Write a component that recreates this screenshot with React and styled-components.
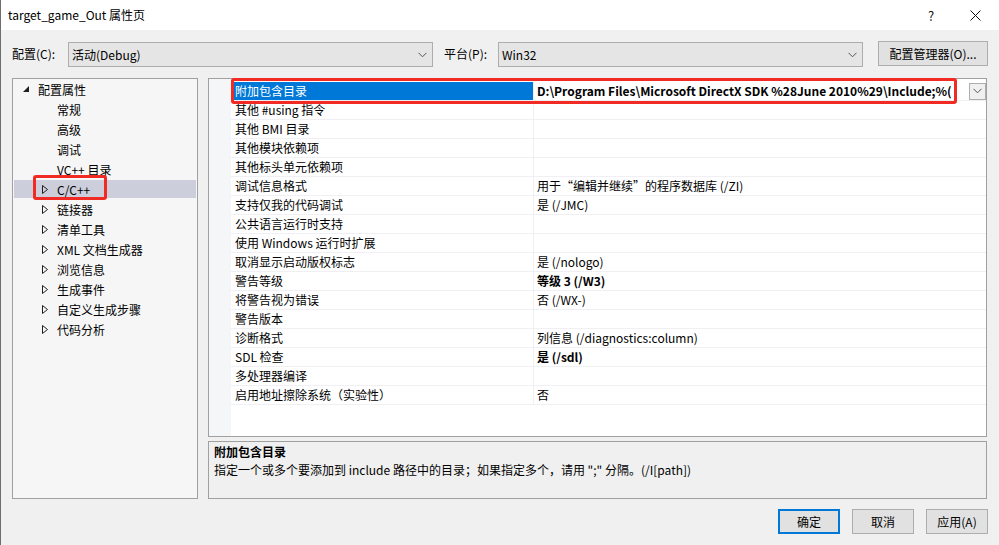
import styled, { createGlobalStyle } from "styled-components";

const GlobalStyle = createGlobalStyle`
  html, body {
    margin: 0;
    padding: 0;
    background: #f0f0f0;
  }
  * {
    box-sizing: border-box;
  }
  body {
    font-family: "Noto Sans CJK SC", "Noto Sans", sans-serif;
    font-size: 12px;
    color: #000;
  }
`;

const Window = styled.div`
  width: 999px;
  height: 545px;
  background: #f0f0f0;
  border-left: 1px solid #6e6e6e;
  display: flex;
  flex-direction: column;
  overflow: hidden;
`;

const TitleBar = styled.div`
  height: 30px;
  flex-shrink: 0;
  background: #fff;
  display: flex;
  align-items: center;
  padding-left: 7px;
  padding-right: 2px;
`;

const Title = styled.div`
  font-size: 12px;
  line-height: 30px;
`;

const TitleButton = styled.div`
  width: 44px;
  height: 30px;
  display: flex;
  align-items: center;
  justify-content: center;
  font-size: 13px;
  color: #111;
  margin-left: ${(p) => (p.$first ? "auto" : "0")};
`;

const ConfigRow = styled.div`
  margin-top: 11px;
  height: 25px;
  flex-shrink: 0;
  display: flex;
  align-items: center;
  padding-left: 11px;
`;

const Label = styled.div`
  width: ${(p) => p.$width}px;
  margin-left: ${(p) => p.$gap || 0}px;
  line-height: 25px;
  white-space: nowrap;
`;

const Combo = styled.div`
  width: 365px;
  height: 25px;
  background: #e5e5e5;
  border: 1px solid #adadad;
  display: flex;
  align-items: center;
  justify-content: space-between;
  padding: 0 5px 0 3px;
  transform: translateY(1px);
`;

const Button = styled.div`
  width: ${(p) => p.$width}px;
  height: 25px;
  margin-left: ${(p) => p.$gap || 0}px;
  background: #e1e1e1;
  border: ${(p) => (p.$default ? "2px solid #0078d7" : "1px solid #adadad")};
  display: flex;
  align-items: center;
  justify-content: center;
  white-space: nowrap;
`;

const Main = styled.div`
  margin-top: 12px;
  height: 421px;
  flex-shrink: 0;
  display: flex;
  padding-left: 11px;
  gap: 10px;
`;

const Tree = styled.div`
  width: 186px;
  height: 100%;
  background: #f6f6f6;
  border: 1px solid #a0a0a0;
  display: flex;
  flex-direction: column;
`;

const TreeItem = styled.div`
  position: relative;
  height: 20px;
  display: flex;
  align-items: center;
  padding-left: ${(p) => 8 + p.$level * 19}px;
  margin-right: 1px;
  white-space: nowrap;
  background: ${(p) =>
    p.$selected ? "linear-gradient(#cccedb, #cccedb) 1px 1px / calc(100% - 1px) 18px no-repeat" : "transparent"};
`;

const Expander = styled.div`
  width: 17px;
  height: 20px;
  display: flex;
  align-items: center;
  padding-left: 2px;
`;

const Annotation = styled.div`
  position: absolute;
  left: ${(p) => p.$left}px;
  top: ${(p) => p.$top}px;
  width: ${(p) => p.$width}px;
  height: ${(p) => p.$height}px;
  border: 3px solid #f22a24;
  border-radius: 3px;
  pointer-events: none;
`;

const RightColumn = styled.div`
  width: 779px;
  height: 100%;
  display: flex;
  flex-direction: column;
  gap: 4px;
`;

const Grid = styled.div`
  position: relative;
  height: 359px;
  flex-shrink: 0;
  background: #fff;
  border: 1px solid #a0a0a0;
  display: flex;
`;

const Gutter = styled.div`
  width: 22px;
  background: #f5f6f8;
`;

const Rows = styled.div`
  flex: 1;
  padding-top: 3px;
  display: flex;
  flex-direction: column;
`;

const Row = styled.div`
  height: 19px;
  display: grid;
  grid-template-columns: 302px 1fr;
  border-bottom: 1px solid #f0f0f4;
`;

const NameCell = styled.div`
  margin-left: 1px;
  padding-left: 3px;
  line-height: 18px;
  white-space: nowrap;
  overflow: hidden;
  background: ${(p) => (p.$selected ? "#0078d7" : "transparent")};
  color: ${(p) => (p.$selected ? "#fff" : "#000")};
`;

const ValueCell = styled.div`
  border-left: 1px solid #f0f0f4;
  padding-left: 3px;
  display: flex;
  align-items: center;
  overflow: hidden;
`;

const ValueText = styled.div`
  flex: 1;
  line-height: 18px;
  white-space: nowrap;
  font-weight: ${(p) => (p.$bold ? 700 : 400)};
`;

const DropButton = styled.div`
  width: 17px;
  height: 17px;
  flex-shrink: 0;
  background: #f0f0f0;
  border: 1px solid #adadad;
  display: flex;
  align-items: center;
  justify-content: center;
`;

const Description = styled.div`
  height: 58px;
  background: #f0f0f0;
  border: 1px solid #a0a0a0;
  padding: 1px 5px 0;
`;

const DescTitle = styled.div`
  font-weight: 700;
  line-height: 18px;
`;

const DescText = styled.div`
  line-height: 18px;
`;

const Footer = styled.div`
  margin-top: 10px;
  display: flex;
  justify-content: flex-end;
  padding-right: 11px;
`;

const Chevron = () => (
  <svg width="9" height="6" viewBox="0 0 9 6">
    <polyline points="0.5,0.8 4.5,4.8 8.5,0.8" fill="none" stroke="#555" strokeWidth="1" />
  </svg>
);

const ExpandedArrow = () => (
  <svg width="6" height="6" viewBox="0 0 6 6">
    <polygon points="6,0 6,6 0,6" fill="#1e1e1e" />
  </svg>
);

const CollapsedArrow = () => (
  <svg width="6" height="9" viewBox="0 0 6 9">
    <polygon points="0.5,0.5 5.5,4.5 0.5,8.5" fill="none" stroke="#1e1e1e" strokeWidth="1" />
  </svg>
);

const CloseIcon = () => (
  <svg width="11" height="11" viewBox="0 0 11 11">
    <line x1="0.5" y1="0.5" x2="10.5" y2="10.5" stroke="#111" strokeWidth="1" />
    <line x1="10.5" y1="0.5" x2="0.5" y2="10.5" stroke="#111" strokeWidth="1" />
  </svg>
);

const treeItems = [
  { label: "配置属性", level: 0, arrow: "open" },
  { label: "常规", level: 1 },
  { label: "高级", level: 1 },
  { label: "调试", level: 1 },
  { label: "VC++ 目录", level: 1 },
  { label: "C/C++", level: 1, arrow: "closed", selected: true, marked: true },
  { label: "链接器", level: 1, arrow: "closed" },
  { label: "清单工具", level: 1, arrow: "closed" },
  { label: "XML 文档生成器", level: 1, arrow: "closed" },
  { label: "浏览信息", level: 1, arrow: "closed" },
  { label: "生成事件", level: 1, arrow: "closed" },
  { label: "自定义生成步骤", level: 1, arrow: "closed" },
  { label: "代码分析", level: 1, arrow: "closed" },
];

const properties = [
  {
    name: "附加包含目录",
    value: "D:\\Program Files\\Microsoft DirectX SDK %28June 2010%29\\Include;%(",
    bold: true,
    selected: true,
  },
  { name: "其他 #using 指令", value: "" },
  { name: "其他 BMI 目录", value: "" },
  { name: "其他模块依赖项", value: "" },
  { name: "其他标头单元依赖项", value: "" },
  { name: "调试信息格式", value: "用于“编辑并继续”的程序数据库 (/ZI)" },
  { name: "支持仅我的代码调试", value: "是 (/JMC)" },
  { name: "公共语言运行时支持", value: "" },
  { name: "使用 Windows 运行时扩展", value: "" },
  { name: "取消显示启动版权标志", value: "是 (/nologo)" },
  { name: "警告等级", value: "等级 3 (/W3)", bold: true },
  { name: "将警告视为错误", value: "否 (/WX-)" },
  { name: "警告版本", value: "" },
  { name: "诊断格式", value: "列信息 (/diagnostics:column)" },
  { name: "SDL 检查", value: "是 (/sdl)", bold: true },
  { name: "多处理器编译", value: "" },
  { name: "启用地址擦除系统（实验性）", value: "否" },
];

export default function App() {
  return (
    <>
      <GlobalStyle />
      <Window>
        <TitleBar>
          <Title>target_game_Out 属性页</Title>
          <TitleButton $first>?</TitleButton>
          <TitleButton>
            <CloseIcon />
          </TitleButton>
        </TitleBar>

        <ConfigRow>
          <Label $width={56}>配置(C):</Label>
          <Combo>
            <span>活动(Debug)</span>
            <Chevron />
          </Combo>
          <Label $width={54} $gap={11}>平台(P):</Label>
          <Combo>
            <span>Win32</span>
            <Chevron />
          </Combo>
          <Button $width={110} $gap={15}>配置管理器(O)...</Button>
        </ConfigRow>

        <Main>
          <Tree>
            {treeItems.map((item) => (
              <TreeItem key={item.label} $level={item.level} $selected={item.selected}>
                <Expander>
                  {item.arrow === "open" && <ExpandedArrow />}
                  {item.arrow === "closed" && <CollapsedArrow />}
                </Expander>
                {item.label}
                {item.marked && <Annotation $left={20} $top={-4} $width={74} $height={25} />}
              </TreeItem>
            ))}
          </Tree>

          <RightColumn>
            <Grid>
              <Gutter />
              <Rows>
                {properties.map((p) => (
                  <Row key={p.name}>
                    <NameCell $selected={p.selected}>{p.name}</NameCell>
                    <ValueCell>
                      <ValueText $bold={p.bold}>{p.value}</ValueText>
                      {p.selected && (
                        <DropButton>
                          <Chevron />
                        </DropButton>
                      )}
                    </ValueCell>
                  </Row>
                ))}
              </Rows>
              <Annotation $left={22} $top={-1} $width={726} $height={26} />
            </Grid>
            <Description>
              <DescTitle>附加包含目录</DescTitle>
              <DescText>指定一个或多个要添加到 include 路径中的目录；如果指定多个，请用 ";" 分隔。(/I[path])</DescText>
            </Description>
          </RightColumn>
        </Main>

        <Footer>
          <Button $width={62} $default>确定</Button>
          <Button $width={62} $gap={12}>取消</Button>
          <Button $width={62} $gap={12}>应用(A)</Button>
        </Footer>
      </Window>
    </>
  );
}
